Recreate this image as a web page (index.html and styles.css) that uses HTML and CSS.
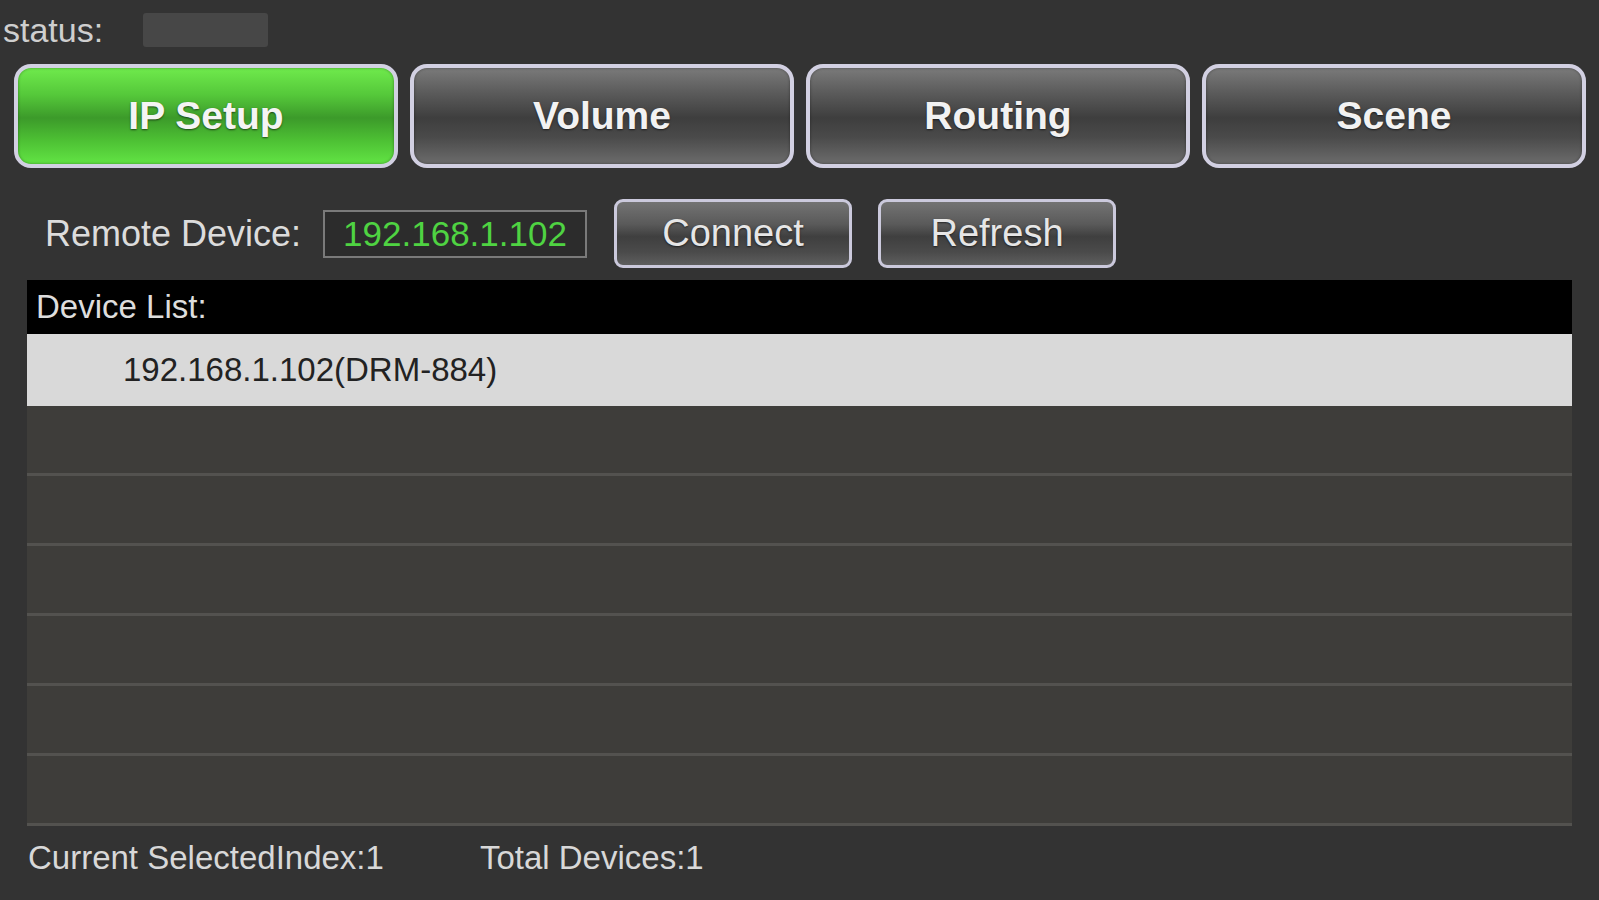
FILE: index.html
```html
<!DOCTYPE html>
<html>
<head>
<meta charset="utf-8">
<link rel="stylesheet" href="styles.css">
</head>
<body>
<div class="status-row">
  <span class="status-label">status:</span>
  <span class="status-box"></span>
</div>
<div class="tabs">
  <div class="tab active">IP Setup</div>
  <div class="tab">Volume</div>
  <div class="tab">Routing</div>
  <div class="tab">Scene</div>
</div>
<div class="remote-row">
  <span class="remote-label">Remote Device:</span>
  <div class="ip-input">192.168.1.102</div>
  <div class="btn btn-connect">Connect</div>
  <div class="btn btn-refresh">Refresh</div>
</div>
<div class="device-list">
  <div class="list-header">Device List:</div>
  <div class="list-row selected">192.168.1.102(DRM-884)</div>
  <div class="list-row"></div>
  <div class="list-row"></div>
  <div class="list-row"></div>
  <div class="list-row"></div>
  <div class="list-row"></div>
  <div class="list-row"></div>
</div>
<div class="footer">
  <span class="footer-item">Current SelectedIndex:1</span>
  <span class="footer-item">Total Devices:1</span>
</div>
</body>
</html>
```
FILE: styles.css
```css
html, body {
  margin: 0;
  padding: 0;
  background: #333333;
  font-family: "Liberation Sans", Arial, sans-serif;
  width: 1599px;
  height: 900px;
  overflow: hidden;
}

.status-row {
  display: flex;
  align-items: center;
  padding: 13px 0 0 3px;
  height: 34px;
}
.status-label {
  font-size: 34px;
  color: #cfcfcf;
  line-height: 34px;
  width: 140px;
}
.status-box {
  display: block;
  width: 125px;
  height: 34px;
  background: #474747;
  border-radius: 3px;
}

.tabs {
  display: flex;
  gap: 12px;
  padding: 0 13px 0 14px;
  margin-top: 17px;
}
.tab {
  flex: 1;
  height: 96px;
  box-sizing: content-box;
  border: 4px solid #d2d0e2;
  border-radius: 17px;
  display: flex;
  align-items: center;
  justify-content: center;
  font-size: 39px;
  font-weight: bold;
  color: #f2f2f2;
  text-shadow: 0 1px 2px rgba(0,0,0,0.6);
  background: linear-gradient(to bottom, #7a7a7a 0%, #5c5c5c 25%, #3e3e3e 52%, #4a4a4a 72%, #6c6c6c 100%);
  box-shadow: inset 0 0 3px rgba(0,0,0,0.4);
}
.tab.active {
  background: linear-gradient(to bottom, #6fea4c 0%, #55c83a 28%, #3c9a2a 52%, #4cbe33 74%, #62e444 100%);
  color: #f4f4f4;
}

.remote-row {
  display: flex;
  align-items: center;
  margin-top: 31px;
  padding-left: 45px;
  height: 69px;
}
.remote-label {
  font-size: 36px;
  color: #dcdcdc;
  width: 278px;
}
.ip-input {
  width: 260px;
  height: 44px;
  border: 2px solid #7a7a7a;
  background: #2c2c2c;
  color: #4fd342;
  font-size: 35px;
  display: flex;
  align-items: center;
  justify-content: center;
}
.btn {
  width: 232px;
  height: 63px;
  border: 3px solid #cbc9dc;
  border-radius: 9px;
  display: flex;
  align-items: center;
  justify-content: center;
  font-size: 38px;
  color: #e6e6e6;
  text-shadow: 0 1px 2px rgba(0,0,0,0.6);
  background: linear-gradient(to bottom, #737373 0%, #5a5a5a 35%, #3f3f3f 55%, #4b4b4b 80%, #5e5e5e 100%);
}
.btn-connect {
  margin-left: 27px;
}
.btn-refresh {
  margin-left: 26px;
}

.device-list {
  margin: 12px 27px 0 27px;
  background: #3e3d3a;
}
.list-header {
  height: 54px;
  background: #000000;
  color: #dddddd;
  font-size: 33px;
  display: flex;
  align-items: center;
  padding-left: 9px;
}
.list-row {
  height: 67px;
  border-bottom: 3px solid #53524f;
  background: #3e3d3a;
}
.list-row.selected {
  height: 72px;
  border-bottom: none;
  background: #d9d9d9;
  color: #222222;
  font-size: 33px;
  display: flex;
  align-items: center;
  padding-left: 96px;
}

.footer {
  display: flex;
  gap: 96px;
  padding-left: 28px;
  margin-top: 12px;
  line-height: 40px;
}
.footer-item {
  font-size: 33px;
  color: #d8d8d8;
}
```
